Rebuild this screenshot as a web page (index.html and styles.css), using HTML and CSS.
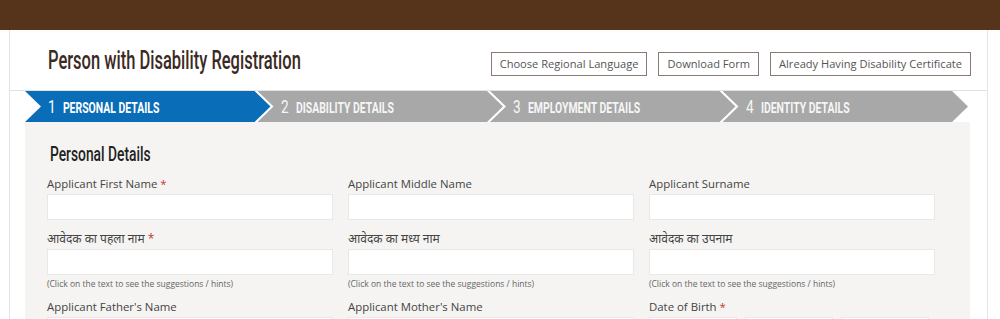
FILE: index.html
```html
<!DOCTYPE html>
<html lang="en">
<head>
<meta charset="utf-8">
<title>Person with Disability Registration</title>
<link rel="stylesheet" href="styles.css">
</head>
<body>
<div class="topbar"></div>
<div class="card">
  <div class="header">
    <h1 class="title"><span class="cond">Person with Disability Registration</span></h1>
    <div class="actions">
      <a class="btn">Choose Regional Language</a>
      <a class="btn">Download Form</a>
      <a class="btn">Already Having Disability Certificate</a>
    </div>
  </div>
  <div class="steps">
    <div class="step active"><span class="txt"><span class="num">1</span><span class="lbl">PERSONAL DETAILS</span></span></div>
    <div class="step"><span class="txt"><span class="num">2</span><span class="lbl">DISABILITY DETAILS</span></span></div>
    <div class="step"><span class="txt"><span class="num">3</span><span class="lbl">EMPLOYMENT DETAILS</span></span></div>
    <div class="step"><span class="txt"><span class="num">4</span><span class="lbl">IDENTITY DETAILS</span></span></div>
  </div>
  <div class="panel">
    <h2 class="section"><span class="cond-s">Personal Details</span></h2>
    <div class="row">
      <div class="field">
        <label class="lab">Applicant First Name <span class="req">*</span></label>
        <div class="inp"></div>
        <label class="lab hi">आवेदक का पहला नाम <span class="req">*</span></label>
        <div class="inp"></div>
        <div class="hint">(Click on the text to see the suggestions / hints)</div>
      </div>
      <div class="field">
        <label class="lab">Applicant Middle Name</label>
        <div class="inp"></div>
        <label class="lab hi">आवेदक का मध्य नाम</label>
        <div class="inp"></div>
        <div class="hint">(Click on the text to see the suggestions / hints)</div>
      </div>
      <div class="field">
        <label class="lab">Applicant Surname</label>
        <div class="inp"></div>
        <label class="lab hi">आवेदक का उपनाम</label>
        <div class="inp"></div>
        <div class="hint">(Click on the text to see the suggestions / hints)</div>
      </div>
    </div>
    <div class="row">
      <div class="field">
        <label class="lab lab-gap">Applicant Father's Name</label>
        <div class="inp"></div>
      </div>
      <div class="field">
        <label class="lab lab-gap">Applicant Mother's Name</label>
        <div class="inp"></div>
      </div>
      <div class="field">
        <label class="lab lab-gap">Date of Birth <span class="req">*</span></label>
        <div class="dob">
          <div class="inp"></div>
          <div class="inp"></div>
          <div class="inp"></div>
        </div>
      </div>
    </div>
  </div>
</div>
</body>
</html>
```

FILE: styles.css
```css
* { box-sizing: border-box; }
html, body { margin: 0; padding: 0; background: #ffffff; }
body {
  font-family: "Open Sans", "Noto Sans", "DejaVu Sans", sans-serif;
  color: #444;
  overflow: hidden;
}
.topbar {
  height: 30px;
  background: #55341b;
}
.card {
  margin: 0 12px 0 9px;
  border-left: 1px solid #e4e4e4;
  border-right: 1px solid #e4e4e4;
  min-height: 289px;
}
.header {
  display: flex;
  align-items: center;
  justify-content: space-between;
  height: 61px;
  padding: 0 16px 0 38px;
  border-bottom: 1px solid #e2e2e2;
}
.title {
  margin: 0;
  font-family: Roboto, "Noto Sans", sans-serif;
  font-weight: 500;
  font-size: 25px;
  color: #3b2a1f;
  padding-top: 1px;
  white-space: nowrap;
}
.cond {
  display: inline-block;
  transform: scaleX(0.66);
  transform-origin: left center;
}
.cond-s {
  display: inline-block;
  transform: scaleX(0.69);
  transform-origin: left center;
}
.actions {
  display: flex;
  gap: 11px;
  padding-top: 7px;
}
.btn {
  display: block;
  border: 1px solid #8a7a72;
  height: 24px;
  line-height: 22px;
  padding: 0 8px;
  font-size: 11.1px;
  color: #555;
  background: #fff;
}
.steps {
  display: flex;
  height: 31px;
  margin: 0 19px 0 15px;
}
.step {
  flex: 1;
  display: flex;
  align-items: center;
  background: #a8a8a8;
  color: #f6f6f6;
  clip-path: polygon(0 0, calc(100% - 16px) 0, 100% 50%, calc(100% - 16px) 100%, 0 100%, 16px 50%);
  margin-left: -13px;
  padding-left: 23px;
  font-family: Roboto, "Noto Sans", sans-serif;
  white-space: nowrap;
}
.step:first-child { margin-left: 0; }
.step.active { background: #0a6db7; color: #fff; }
.txt {
  display: inline-block;
  transform: scaleX(0.72);
  transform-origin: left center;
}
.num { font-size: 19px; margin-right: 10px; font-weight: 400; }
.lbl { font-size: 14.5px; font-weight: 700; }
.panel {
  background: #f5f4f2;
  margin: 0 17px 0 15px;
  padding: 21px 22px 0 22px;
  min-height: 200px;
}
.section {
  margin: 0 0 8px 3px;
  font-family: Roboto, "Noto Sans", sans-serif;
  font-weight: 500;
  font-size: 20px;
  line-height: 22px;
  color: #222;
  white-space: nowrap;
}
.row {
  display: grid;
  grid-template-columns: 286px 286px 286px;
  column-gap: 15px;
}
.field { display: flex; flex-direction: column; }
.lab {
  display: block;
  font-size: 11.4px;
  line-height: 15px;
  padding-top: 3px;
  color: #444;
  margin-bottom: 3px;
}
.lab.hi { font-size: 12px; }
.inp + .lab { margin-top: 8px; }
.lab-gap { margin-top: 6px; }
.req { color: #c0392b; }
.inp {
  height: 26px;
  background: #fff;
  border: 1px solid #e8e8e8;
}
.hint {
  margin-top: 3px;
  font-size: 8.5px;
  line-height: 12px;
  color: #666;
}
.dob {
  display: grid;
  grid-template-columns: 88px 88px 88px;
  column-gap: 8px;
}
```
